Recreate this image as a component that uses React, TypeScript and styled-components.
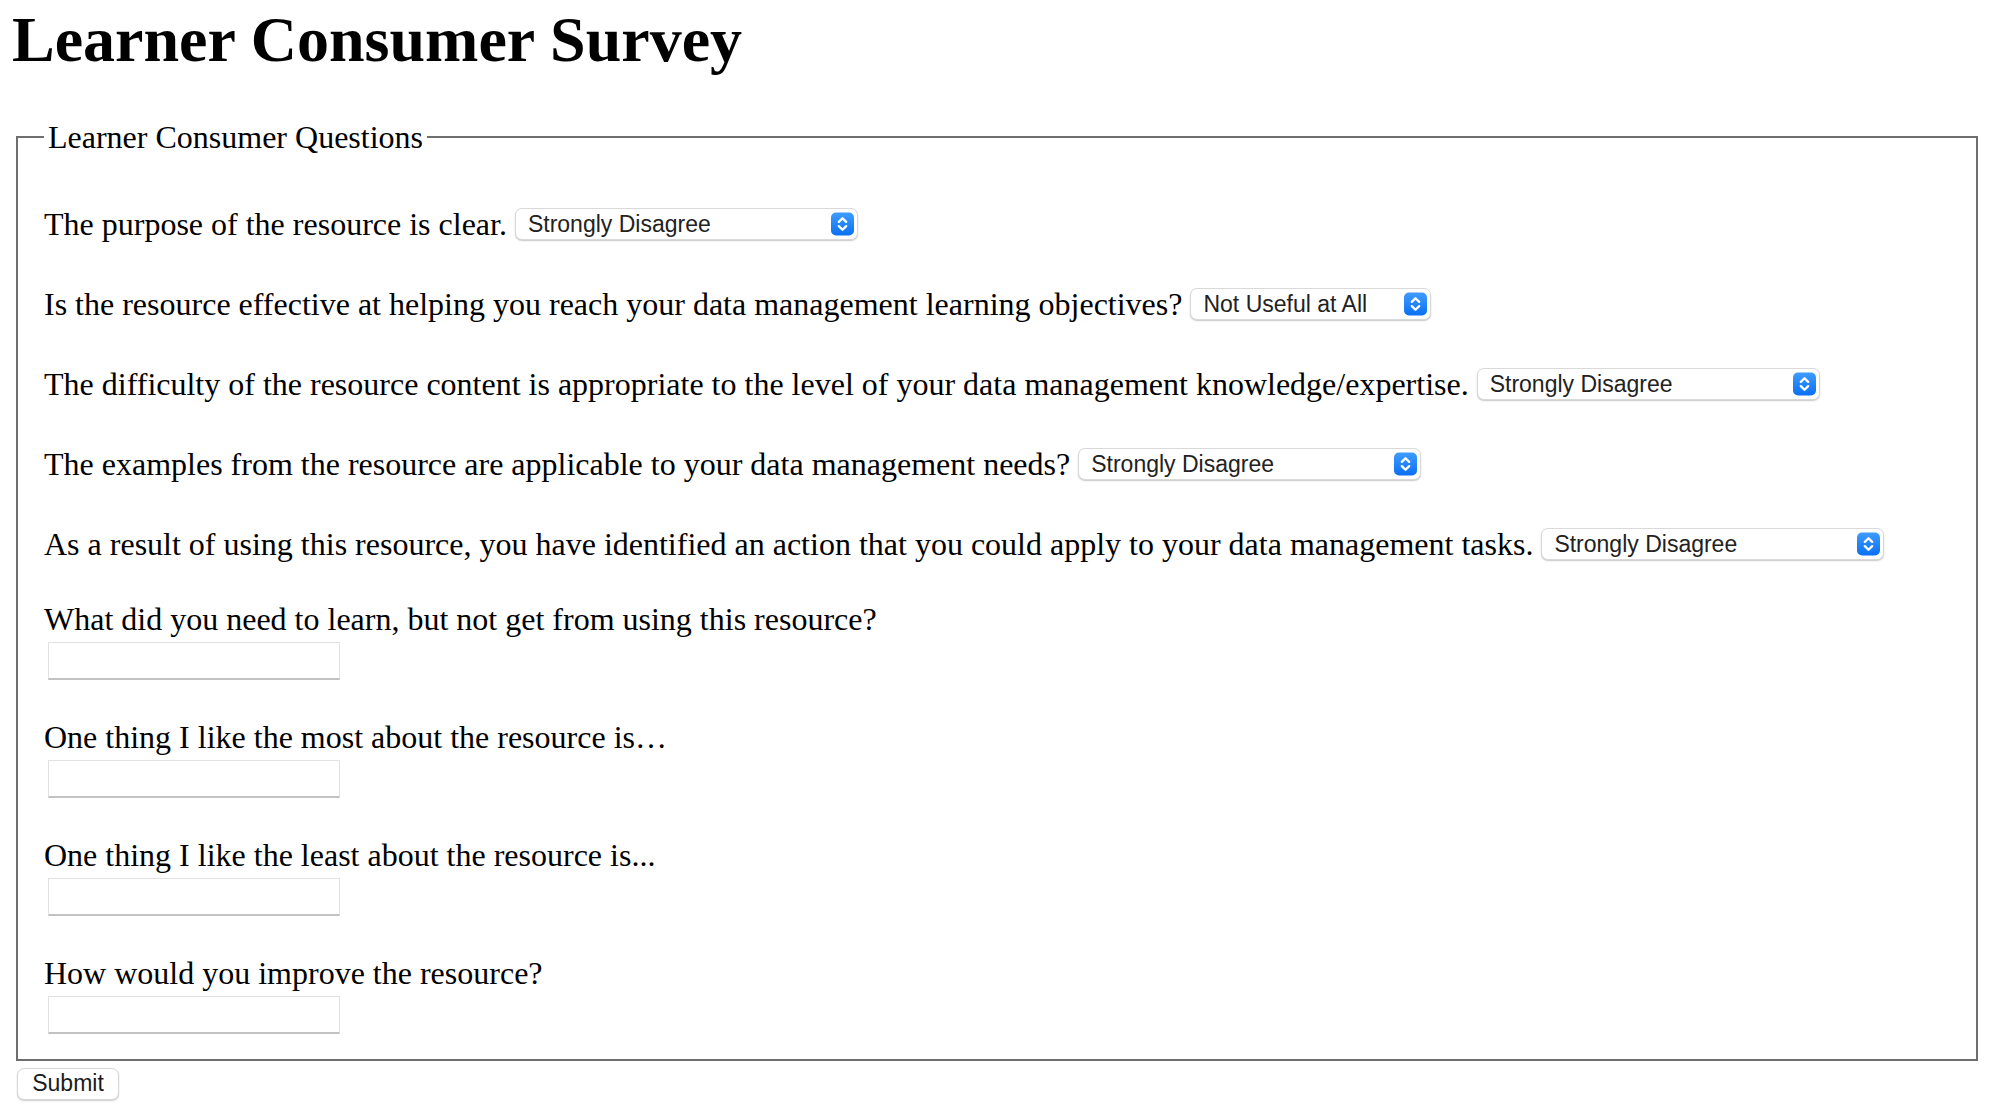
import React from "react";
import styled, { createGlobalStyle } from "styled-components";

const GlobalStyle = createGlobalStyle`
  html, body {
    margin: 0;
    padding: 0;
    background: #ffffff;
  }
  body {
    font-family: "Liberation Serif", "Times New Roman", serif;
    color: #000000;
  }
`;

const Page = styled.div`
  display: flex;
  flex-direction: column;
  align-items: flex-start;
  padding: 3px 14px 24px 12px;
`;

const Title = styled.h1`
  margin: 0 0 42px 0;
  font-size: 64px;
  line-height: 74px;
  font-weight: 700;
`;

const Form = styled.form`
  display: flex;
  flex-direction: column;
  align-items: flex-start;
  align-self: stretch;
`;

const Fieldset = styled.fieldset`
  align-self: stretch;
  margin: 0 0 0 4px;
  padding: 0 26px 25px 26px;
  border: 2px solid #6e6e6e;
  min-width: 0;
`;

const Legend = styled.legend`
  padding: 0 4px;
  font-size: 32px;
  line-height: 36px;
`;

const Questions = styled.div`
  display: flex;
  flex-direction: column;
  align-items: flex-start;
  padding-top: 53px;
`;

const SelectRow = styled.div`
  display: flex;
  align-items: flex-start;
  gap: 8px;
  & + & {
    margin-top: 48px;
  }
`;

const QuestionLabel = styled.label`
  font-size: 32px;
  line-height: 32px;
  white-space: nowrap;
`;

const TextBlock = styled.div`
  display: flex;
  flex-direction: column;
  align-items: flex-start;
  gap: 6.5px;
  margin-top: 43px;
  & + & {
    margin-top: 41.5px;
  }
`;

const SelectBox = styled.div<{ $width: number }>`
  position: relative;
  width: ${(p) => p.$width}px;
  height: 32px;
  flex: none;
`;

const NativeSelect = styled.select`
  appearance: none;
  -webkit-appearance: none;
  box-sizing: border-box;
  width: 100%;
  height: 100%;
  margin: 0;
  padding: 0 34px 0 12px;
  border: 1px solid #d9d9d9;
  border-radius: 7px;
  background: #ffffff;
  box-shadow: 0 1px 1.5px rgba(0, 0, 0, 0.22);
  font-family: "Liberation Sans", Arial, sans-serif;
  font-size: 23px;
  color: #222222;
  outline: none;
`;

const Stepper = styled.span`
  position: absolute;
  right: 4px;
  top: 50%;
  transform: translateY(-50%);
  width: 23px;
  height: 23px;
  border-radius: 5px;
  background: linear-gradient(#3f9cff, #0a70f2);
  display: flex;
  align-items: center;
  justify-content: center;
  pointer-events: none;
`;

const TextField = styled.input`
  box-sizing: border-box;
  width: 292px;
  height: 38px;
  margin: 0 0 0 4px;
  padding: 0 6px;
  border: 1px solid #e2e2e2;
  border-bottom: 2px solid #c2c2c2;
  background: #ffffff;
  font-family: "Liberation Sans", Arial, sans-serif;
  font-size: 23px;
  outline: none;
`;

const SubmitButton = styled.button`
  box-sizing: border-box;
  width: 102px;
  height: 32px;
  margin: 7px 0 0 5px;
  padding: 0;
  border: 1px solid #d6d6d6;
  border-radius: 7px;
  background: #ffffff;
  box-shadow: 0 1px 1.5px rgba(0, 0, 0, 0.2);
  font-family: "Liberation Sans", Arial, sans-serif;
  font-size: 23px;
  color: #1c1c1c;
`;

const agreeOptions = [
  "Strongly Disagree",
  "Disagree",
  "Neither Agree nor Disagree",
  "Agree",
  "Strongly Agree",
];

const usefulOptions = [
  "Not Useful at All",
  "Slightly Useful",
  "Very Useful",
  "Useful",
];

const StepperIcon = () => (
  <svg width="23" height="23" viewBox="0 0 23 23" fill="none">
    <path
      d="M7.8 9.4 L11.5 5.7 L15.2 9.4"
      stroke="#ffffff"
      strokeWidth="2.3"
      strokeLinecap="round"
      strokeLinejoin="round"
    />
    <path
      d="M7.8 13.6 L11.5 17.3 L15.2 13.6"
      stroke="#ffffff"
      strokeWidth="2.3"
      strokeLinecap="round"
      strokeLinejoin="round"
    />
  </svg>
);

type SelectQ = { id: string; text: string; options: string[]; width: number };

const selectQuestions: SelectQ[] = [
  { id: "q1", text: "The purpose of the resource is clear.", options: agreeOptions, width: 343 },
  {
    id: "q2",
    text: "Is the resource effective at helping you reach your data management learning objectives?",
    options: usefulOptions,
    width: 241,
  },
  {
    id: "q3",
    text: "The difficulty of the resource content is appropriate to the level of your data management knowledge/expertise.",
    options: agreeOptions,
    width: 343,
  },
  {
    id: "q4",
    text: "The examples from the resource are applicable to your data management needs?",
    options: agreeOptions,
    width: 343,
  },
  {
    id: "q5",
    text: "As a result of using this resource, you have identified an action that you could apply to your data management tasks.",
    options: agreeOptions,
    width: 343,
  },
];

const textQuestions = [
  { id: "q6", text: "What did you need to learn, but not get from using this resource?" },
  { id: "q7", text: "One thing I like the most about the resource is\u2026" },
  { id: "q8", text: "One thing I like the least about the resource is..." },
  { id: "q9", text: "How would you improve the resource?" },
];

export default function App() {
  return (
    <>
      <GlobalStyle />
      <Page>
        <Title>Learner Consumer Survey</Title>
        <Form onSubmit={(e) => e.preventDefault()}>
          <Fieldset>
            <Legend>Learner Consumer Questions</Legend>
            <Questions>
              {selectQuestions.map((q) => (
                <SelectRow key={q.id}>
                  <QuestionLabel htmlFor={q.id}>{q.text}</QuestionLabel>
                  <SelectBox $width={q.width}>
                    <NativeSelect id={q.id} defaultValue={q.options[0]}>
                      {q.options.map((o) => (
                        <option key={o} value={o}>
                          {o}
                        </option>
                      ))}
                    </NativeSelect>
                    <Stepper>
                      <StepperIcon />
                    </Stepper>
                  </SelectBox>
                </SelectRow>
              ))}
              {textQuestions.map((q) => (
                <TextBlock key={q.id}>
                  <QuestionLabel htmlFor={q.id}>{q.text}</QuestionLabel>
                  <TextField id={q.id} type="text" />
                </TextBlock>
              ))}
            </Questions>
          </Fieldset>
          <SubmitButton type="submit">Submit</SubmitButton>
        </Form>
      </Page>
    </>
  );
}
